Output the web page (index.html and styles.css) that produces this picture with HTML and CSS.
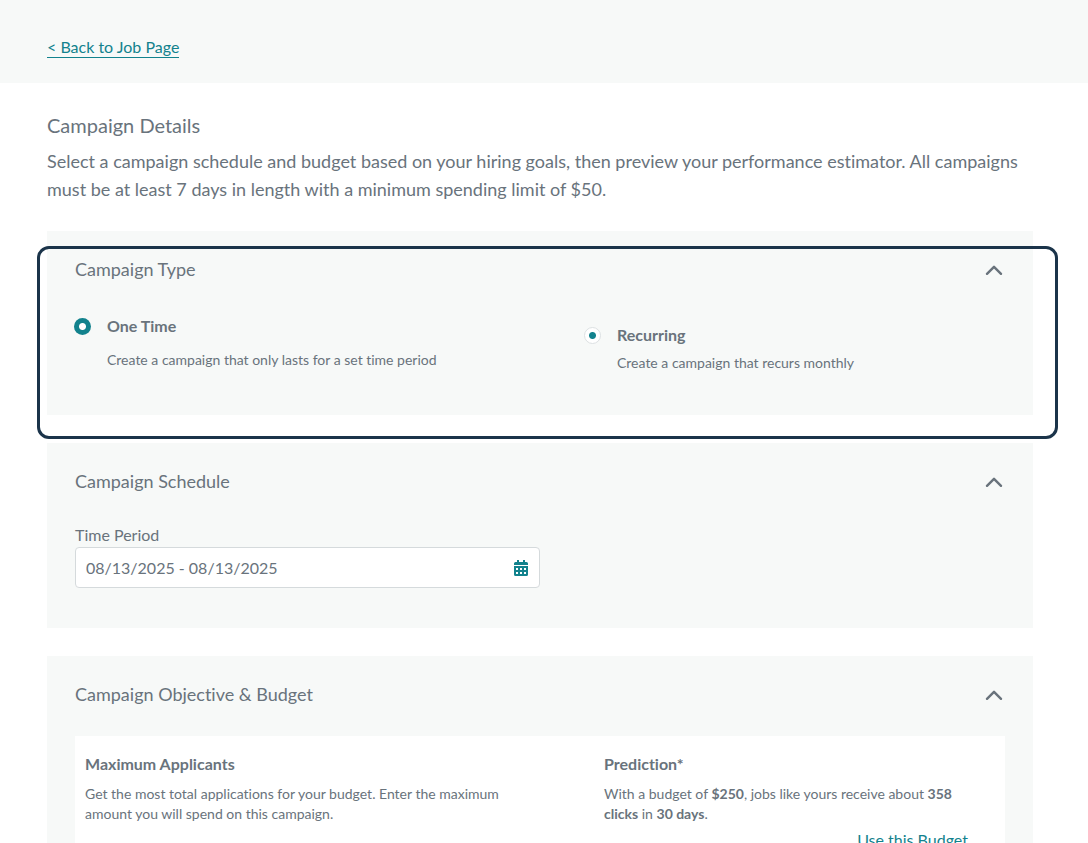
FILE: index.html
```html
<!DOCTYPE html>
<html lang="en">
<head>
<meta charset="utf-8">
<title>Campaign Details</title>
<link rel="stylesheet" href="styles.css">
</head>
<body>
<header class="topbar"><a class="link back-link" href="#">&lt; Back to Job Page</a></header>
<main class="content">
  <h1 class="page-title">Campaign Details</h1>
  <p class="intro">Select a campaign schedule and budget based on your hiring goals, then preview your performance estimator. All campaigns must be at least 7 days in length with a minimum spending limit of $50.</p>

  <section class="panel panel-type">
    <div class="panel-head">
      <h2 class="panel-title">Campaign Type</h2>
      <button class="toggle" type="button" aria-label="Collapse Campaign Type"><svg class="chevron" viewBox="0 0 18 12"><path d="M2 9.8 9 2.8l7 7"/></svg></button>
    </div>
    <div class="options">
      <div class="option">
        <input class="radio radio-on" type="radio" name="type" id="one-time" checked>
        <div class="option-text option-text-wide">
          <label class="strong-label" for="one-time">One Time</label>
          <p class="small">Create a campaign that only lasts for a set time period</p>
        </div>
      </div>
      <div class="option option-recurring">
        <input class="radio radio-off" type="radio" name="type" id="recurring">
        <div class="option-text">
          <label class="strong-label" for="recurring">Recurring</label>
          <p class="small">Create a campaign that recurs monthly</p>
        </div>
      </div>
    </div>
    <div class="highlight"></div>
  </section>

  <section class="panel panel-schedule">
    <div class="panel-head">
      <h2 class="panel-title">Campaign Schedule</h2>
      <button class="toggle" type="button" aria-label="Collapse Campaign Schedule"><svg class="chevron" viewBox="0 0 18 12"><path d="M2 9.8 9 2.8l7 7"/></svg></button>
    </div>
    <label class="field-label" for="period">Time Period</label>
    <div class="field">
      <input class="field-input" id="period" type="text" value="08/13/2025 - 08/13/2025">
      <svg class="calendar" viewBox="0 0 14 16"><path fill-rule="evenodd" d="M3 0h2v2h4V0h2v2h1.5A1.5 1.5 0 0 1 14 3.5V5H0V3.5A1.5 1.5 0 0 1 1.5 2H3zM0 6h14v8.5a1.5 1.5 0 0 1-1.5 1.5h-11A1.5 1.5 0 0 1 0 14.5zM2 8v2h2V8zm4 0v2h2V8zm4 0v2h2V8zM2 12v2h2v-2zm4 0v2h2v-2zm4 0v2h2v-2z"/></svg>
    </div>
  </section>

  <section class="panel">
    <div class="panel-head">
      <h2 class="panel-title">Campaign Objective &amp; Budget</h2>
      <button class="toggle" type="button" aria-label="Collapse Campaign Objective &amp; Budget"><svg class="chevron" viewBox="0 0 18 12"><path d="M2 9.8 9 2.8l7 7"/></svg></button>
    </div>
    <div class="budget">
      <div class="goal">
        <h3 class="strong-label">Maximum Applicants</h3>
        <p class="small">Get the most total applications for your budget. Enter the maximum amount you will spend on this campaign.</p>
      </div>
      <div class="prediction">
        <h3 class="strong-label">Prediction*</h3>
        <p class="small">With a budget of <b>$250</b>, jobs like yours receive about <b>358 clicks</b> in <b>30 days</b>.</p>
        <a class="link use-link" href="#">Use this Budget</a>
      </div>
    </div>
  </section>
</main>
</body>
</html>
```
FILE: styles.css
```css
* { box-sizing: border-box; }
body {
  margin: 0;
  height: 100vh;
  overflow: hidden;
  background: #fff;
  color: #69737c;
  font: 16px/24px Lato, "Liberation Sans", sans-serif;
  font-variant-ligatures: none;
}
h1, h2, h3, p { margin: 0; font-weight: 400; }
.topbar { background: #f7f9f8; padding: 37px 47px 25px; display: flex; }
.link { color: #12828d; text-decoration: none; border-bottom: 1px solid #12828d; }
.back-link { line-height: 20px; }
.content { padding: 28px 55px 28px 47px; }
.page-title { font-size: 20px; line-height: 28px; }
.intro { font-size: 18px; line-height: 28px; margin: 8px 0 28px; }
.panel { background: #f7f9f8; padding: 24px 28px 28px; margin-bottom: 28px; }
.panel-type { position: relative; padding-bottom: 42px; }
.panel-schedule { padding-bottom: 40px; }
.panel-head { display: flex; justify-content: space-between; align-items: center; }
.panel-title { font-size: 18px; line-height: 28px; }
.toggle { background: none; border: 0; padding: 2px 2px 0; display: flex; }
.chevron { width: 18px; height: 12px; fill: none; stroke: #69737c; stroke-width: 2.4; stroke-linecap: round; stroke-linejoin: round; }
.options { display: grid; grid-template-columns: 510px 1fr; margin-top: 31px; align-items: start; }
.option { display: flex; gap: 16px; align-items: flex-start; }
.option-recurring { padding-top: 9px; }
.radio {
  appearance: none;
  flex: none;
  width: 17px;
  height: 17px;
  margin: 4px 0 0 -1px;
  border-radius: 50%;
}
.radio-on { background: radial-gradient(circle, #fff 3px, #12828d 4px); }
.radio-off { background: radial-gradient(circle, #12828d 3px, #fff 4px); border: 1px solid #dde1e3; }
.option-text { display: flex; flex-direction: column; gap: 6px; }
.option-text-wide { gap: 12px; }
.strong-label { font-size: 16px; line-height: 24px; font-weight: 700; }
.small { font-size: 14px; line-height: 20px; }
.highlight {
  position: absolute;
  inset: 15px -25px -24px -10px;
  border: 3px solid #1b344a;
  border-radius: 12px;
  pointer-events: none;
}
.field-label { display: block; margin-top: 28px; }
.field {
  display: flex;
  align-items: center;
  width: 50%;
  height: 41px;
  padding: 0 11px 0 10px;
  background: #fff;
  border: 1px solid #d5dadc;
  border-radius: 4px;
}
.field-input { flex: 1; min-width: 0; border: 0; padding: 0; outline: 0; background: none; color: inherit; font: inherit; }
.calendar { width: 14px; height: 16px; fill: #12828d; }
.budget { display: grid; grid-template-columns: 440px 374px; justify-content: start; column-gap: 79px; background: #fff; margin-top: 28px; padding: 16px 10px 28px; }
.budget .small { margin-top: 8px; }
.prediction { display: flex; flex-direction: column; }
.use-link { align-self: flex-end; margin: 4px 10px 0 0; }
```
